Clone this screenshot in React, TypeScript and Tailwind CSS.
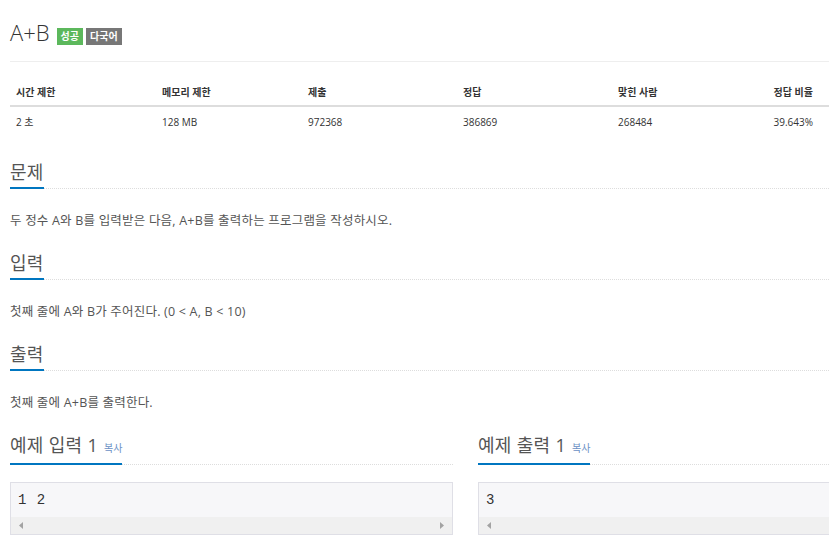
const font = "font-['Open_Sans','Noto_Sans_CJK_KR',sans-serif]";

const limits = [
  { head: "시간 제한", value: "2 초", w: "w-[146px]" },
  { head: "메모리 제한", value: "128 MB", w: "w-[146px]" },
  { head: "제출", value: "972368", w: "w-[155px]" },
  { head: "정답", value: "386869", w: "w-[155px]" },
  { head: "맞힌 사람", value: "268484", w: "w-[160px]" },
];

function Headline({ children, copy }: { children: string; copy?: boolean }) {
  return (
    <div className="border-b border-dotted border-[#dddddd] leading-none">
      <h2 className="inline-block border-b-2 border-[#0076c0] -mb-px pb-[3px] text-[18px] leading-[24px] tracking-[0.3px] text-[#555555]">
        {children}
        {copy && <span className="ml-[6px] text-[10px] tracking-normal text-[#6a8fc4]">복사</span>}
      </h2>
    </div>
  );
}

function Section({ title, text }: { title: string; text: string }) {
  return (
    <section>
      <Headline>{title}</Headline>
      <p className="mt-[23px] mb-[21px] text-[12.5px] leading-[18px] tracking-[0.2px] text-[#555555]">{text}</p>
    </section>
  );
}

function Arrow({ dir }: { dir: "left" | "right" }) {
  return (
    <svg width="5" height="7" viewBox="0 0 5 7">
      <path d={dir === "left" ? "M4 0 L0 3.5 L4 7 Z" : "M1 0 L5 3.5 L1 7 Z"} fill="#a3a3a3" />
    </svg>
  );
}

function Sample({ title, data, cut }: { title: string; data: string; cut?: boolean }) {
  return (
    <div>
      <Headline copy>{title}</Headline>
      <div className="mt-[17px] border border-[#dfdfe6] bg-[#f7f7f9]">
        <pre className="h-[34px] px-[7px] pt-[8px] font-['Liberation_Mono',monospace] text-[14px] leading-[18px] tracking-[1px] text-[#333333]">
          {data}
        </pre>
        <div className="flex h-[17px] items-center justify-between bg-[#f0f0f0] px-[8px]">
          <Arrow dir="left" />
          {!cut && <Arrow dir="right" />}
        </div>
      </div>
    </div>
  );
}

export default function App() {
  return (
    <div className={`h-[544px] w-[829px] overflow-hidden bg-white ${font}`}>
      <div className="w-[931px] px-[10px] pt-[17px]">
        <div className="flex items-start border-b border-[#eeeeee] pb-[14px]">
          <h1 className="text-[22px] font-light leading-[30px] text-[#333333]">A+B</h1>
          <span className="ml-[7px] mt-[11px] h-[17px] bg-[#5cb85c] px-[4px] text-[10px] font-bold leading-[17px] text-white">
            성공
          </span>
          <span className="ml-[3px] mt-[11px] h-[17px] bg-[#777777] px-[4px] text-[10px] font-bold leading-[17px] text-white">
            다국어
          </span>
        </div>

        <table className="mt-[13px] w-[819px] border-collapse text-[10px] text-[#333333]">
          <thead>
            <tr className="border-b-2 border-[#dddddd]">
              {limits.map((c) => (
                <th key={c.head} className={`${c.w} h-[31px] px-[6px] pt-[9px] pb-[6px] text-left font-bold leading-[14px]`}>
                  {c.head}
                </th>
              ))}
              <th className="h-[31px] pr-[16px] pt-[9px] pb-[6px] text-right font-bold leading-[14px]">정답 비율</th>
            </tr>
          </thead>
          <tbody>
            <tr>
              {limits.map((c) => (
                <td key={c.head} className="h-[30px] px-[6px] py-[8px] leading-[14px]">
                  {c.value}
                </td>
              ))}
              <td className="h-[30px] pr-[16px] py-[8px] text-right leading-[14px]">39.643%</td>
            </tr>
          </tbody>
        </table>

        <div className="mt-[23px]">
          <Section title="문제" text="두 정수 A와 B를 입력받은 다음, A+B를 출력하는 프로그램을 작성하시오." />
          <Section title="입력" text="첫째 줄에 A와 B가 주어진다. (0 < A, B < 10)" />
          <Section title="출력" text="첫째 줄에 A+B를 출력한다." />
        </div>

        <div className="grid grid-cols-[443px_443px] gap-[25px]">
          <Sample title="예제 입력 1" data="1 2" />
          <Sample title="예제 출력 1" data="3" cut />
        </div>
      </div>
    </div>
  );
}
